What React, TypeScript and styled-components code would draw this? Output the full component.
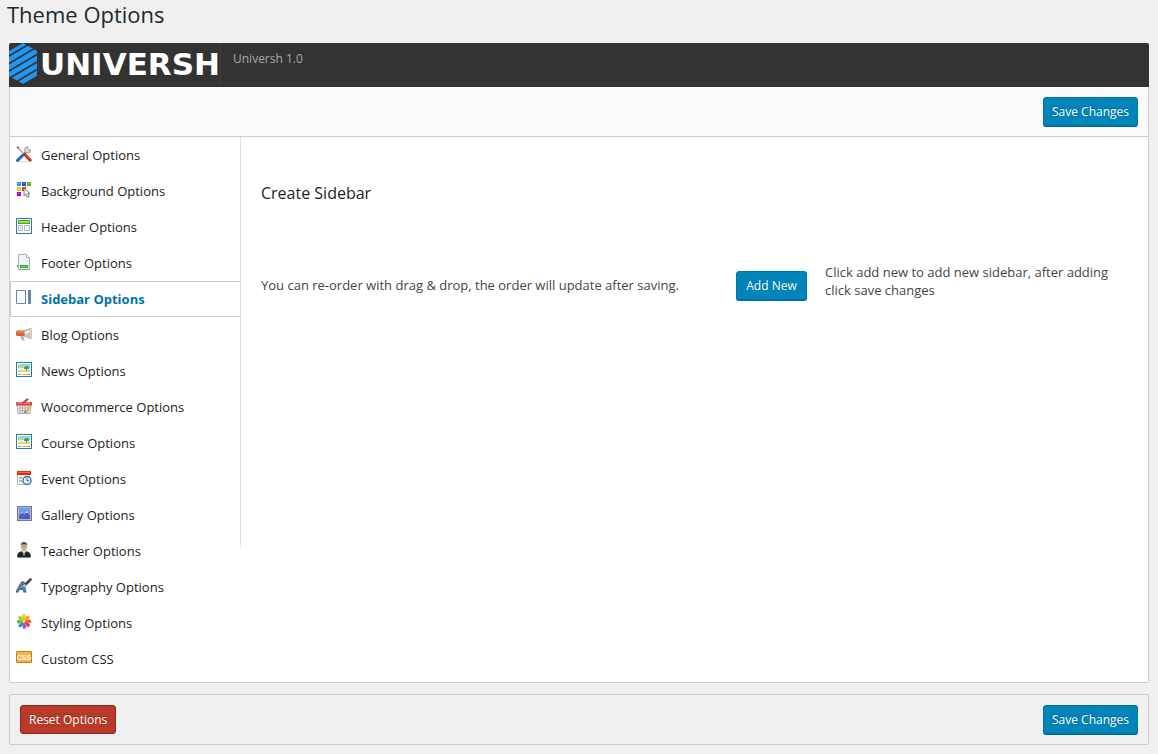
import React, { useState } from "react";
import styled, { createGlobalStyle } from "styled-components";

const GlobalStyle = createGlobalStyle`
  *, *::before, *::after { box-sizing: border-box; }
  body {
    margin: 0;
    background: #f0f0f0;
    color: #444;
    font: 13px/18px "Open Sans", "Noto Sans", sans-serif;
  }
`;

const Page = styled.div`
  padding: 0 9px 9px;
`;

const Title = styled.h1`
  margin: 0 0 15px -2px;
  font-size: 22px;
  font-weight: 400;
  line-height: 28px;
  color: #23282d;
`;

const Panel = styled.form`
  display: block;
`;

const Header = styled.header`
  display: flex;
  height: 44px;
  background: #333;
  border-radius: 2px 2px 0 0;
`;

const Logo = styled.div`
  display: flex;
  align-items: center;
  width: 212px;
  height: 41px;
  border-right: 1px solid #3c3c3c;
  color: #fff;
  font: bold 31px/40px "DejaVu Sans", sans-serif;
`;

const LogoMark = styled.svg`
  flex: none;
  width: 28px;
  height: 41px;
  margin-right: 3px;
`;

const Version = styled.span`
  padding: 7px 12px;
  font-size: 12px;
  color: #aaa;
`;

const Toolbar = styled.div`
  display: flex;
  justify-content: flex-end;
  padding: 10px;
  height: 50px;
  background: #fafafa;
  border: 1px solid #ccc;
  border-top: 0;
`;

const Body = styled.div`
  display: flex;
  align-items: flex-start;
  background: #fff;
  border: 1px solid #ccc;
  border-top: 0;
  border-radius: 0 0 2px 2px;
`;

const Nav = styled.nav`
  flex: none;
  width: 230px;
  padding-bottom: 5px;
`;

const NavLink = styled.a<{ $active: boolean }>`
  display: flex;
  align-items: center;
  gap: 9px;
  height: 36px;
  padding-left: ${(p) => (p.$active ? "5px" : "6px")};
  border: solid #ccc;
  border-width: ${(p) => (p.$active ? "1px 0 1px 1px" : "0")};
  border-radius: 2px 0 0 2px;
  color: ${(p) => (p.$active ? "#0073aa" : "#222")};
  font-weight: ${(p) => (p.$active ? 700 : 400)};
  text-decoration: none;
`;

const Icon = styled.svg`
  flex: none;
  width: 16px;
  height: 16px;
  margin-bottom: 2px;
`;

const Main = styled.main`
  flex: 1;
  min-width: 0;
  min-height: 410px;
  padding: 44px 20px 0;
  border-left: 1px solid #dfdfdf;
`;

const SectionTitle = styled.h2`
  margin: 0 0 58px;
  font-size: 16px;
  font-weight: 400;
  line-height: 24px;
  color: #222;
`;

const SettingRow = styled.div`
  display: grid;
  grid-template-columns: 475px auto minmax(0, 1fr);
  align-items: center;
`;

const Text = styled.p`
  margin: 0;
`;

const Help = styled.p`
  margin: 0 10px 8px 18px;
`;

const Button = styled.button<{ $danger?: boolean }>`
  height: 29px;
  min-width: 71px;
  padding: 0 8px;
  border: 1px solid ${(p) => (p.$danger ? "#8a2b1d" : "#0073aa")};
  border-radius: 3px;
  background: ${(p) => (p.$danger ? "#b93a28" : "#0085ba")};
  box-shadow: 0 1px 0 ${(p) => (p.$danger ? "transparent" : "#006799")};
  color: #fff;
  font: 400 12px/27px "Open Sans", sans-serif;
  text-shadow: 0 -1px 1px ${(p) => (p.$danger ? "#8a2b1d" : "#006799")};
  cursor: pointer;
`;

const Footer = styled.footer`
  display: flex;
  justify-content: space-between;
  margin-top: 11px;
  padding: 10px;
  height: 51px;
  border: 1px solid #ccc;
  border-radius: 2px;
`;

const newsIcon = (
  <>
    <path fill="#1b7fb5" d="M0 0h16v15H0z" />
    <path fill="#fff" d="M1 1h14v13H1z" />
    <path fill="#8dd4f5" d="M2 2h12v8H2z" />
    <path fill="#ddf3fb" d="M2 6h12v2H2z" />
    <path fill="#ffc928" d="M3 3h3v3H3z" />
    <path fill="#e9d877" d="M2 8h5l7 1v1H2z" />
    <path fill="#5c9a3c" d="M8 5h1V4h3v1h1v2h-2v2h-1V7H8z" />
    <path fill="#77b843" d="M2 12h3v1H2z" />
    <path fill="#f4a32f" d="M6 12h3v1H6z" />
    <path fill="#f0713b" d="M10 12h4v1h-4z" />
  </>
);

const items: { label: string; icon: React.ReactNode }[] = [
  {
    label: "General Options",
    icon: (
      <>
        <path d="M1 1l6 6" stroke="#a5a5a5" strokeWidth="1.4" />
        <path d="M1 1l2 1" stroke="#666" strokeWidth="1.4" />
        <path d="M5 11l6-6" stroke="#bbb" strokeWidth="2.4" />
        <path d="M14.5 3.5a3 3 0 1 1-2.5-2.6L11.4 3l1.4 1.3z" fill="#ddd" stroke="#888" strokeWidth=".8" />
        <path d="M1.5 14.5l5-5" stroke="#2563c9" strokeWidth="3" strokeLinecap="round" />
        <path d="M8.5 8l5.7 6.2" stroke="#c92218" strokeWidth="3" strokeLinecap="round" />
        <path d="M9 8l5 5.5" stroke="#f17862" strokeWidth=".7" />
        <path d="M3 15.5h11" stroke="#ccc" strokeWidth=".8" />
      </>
    ),
  },
  {
    label: "Background Options",
    icon: (
      <>
        <path fill="#199fe9" d="M1 0h4v4H1z" />
        <path fill="#3140cc" d="M6 0h4v4H6z" />
        <path fill="#63ae09" d="M11 0h4v4h-4z" />
        <path fill="#f7c600" d="M1 5h4v4H1z" />
        <path fill="#d8322b" d="M6 5h4v4H6z" />
        <path fill="#9b00e8" d="M1 10h4v4H1z" />
        <path fill="#fff" opacity=".35" d="M2 1h2v1H2zM7 1h2v1H7zM12 1h2v1h-2zM2 6h2v1H2zM7 6h2v1H7zM2 11h2v1H2z" />
        <path d="M8 6v8l2-1.7 1.3 3 1.9-.8-1.3-2.8H14z" fill="#eee" stroke="#777" strokeWidth=".9" />
      </>
    ),
  },
  {
    label: "Header Options",
    icon: (
      <>
        <path fill="#1b7eaf" d="M0 0h16v16H0z" />
        <path fill="#fff" d="M1 1h14v14H1z" />
        <path fill="#4f9e17" d="M2 2h12v4H2z" />
        <path fill="#a6dd58" d="M3 3h10v2H3z" />
        <path fill="#bbb" d="M2 7h5v6H2zM8 7h6v6H8z" />
        <path fill="#f4f4f4" d="M3 8h3v4H3zM9 8h4v4H9z" />
        <path fill="#bbb" d="M4 9h1v2H4z" />
      </>
    ),
  },
  {
    label: "Footer Options",
    icon: (
      <>
        <path d="M2.5.5h8l3 3v12h-11z" fill="#edf4f6" stroke="#a5b4b9" />
        <path d="M10.5.5v3h3" fill="#fff" stroke="#a5b4b9" />
        <path fill="#22a82d" d="M1 11h1v2H1zM4 11h8v3H4z" />
        <path fill="#75e36f" d="M5 12h6v1H5z" />
        <path stroke="#888" strokeWidth=".8" d="M3 15.6h11" />
      </>
    ),
  },
  {
    label: "Sidebar Options",
    icon: (
      <>
        <path d="M.5.5h9v13h-9z" fill="#fafcfd" stroke="#6288ad" />
        <path fill="#6288ad" d="M12 0h3v14h-3z" />
      </>
    ),
  },
  {
    label: "Blog Options",
    icon: (
      <>
        <path d="M7 5l7-2.5v10L7 10z" fill="#c6c9cb" stroke="#999" strokeWidth=".6" />
        <path d="M8 6l6-2v3L8 8z" fill="#eee" />
        <path d="M.5 4.500h8v5.500h-8q-1-2.700 0-5.500z" fill="#d7642c" />
        <path d="M1.500 6H8" stroke="#f4a36f" />
        <path d="M4 10h3.500l1.200 4.500H6z" fill="#b6babd" />
        <path d="M15.200 2v11" stroke="#e2a37c" />
      </>
    ),
  },
  { label: "News Options", icon: newsIcon },
  {
    label: "Woocommerce Options",
    icon: (
      <>
        <path d="M1 7h14l-1 8.500H2z" fill="#f2f2f2" stroke="#999" strokeWidth=".8" />
        <path d="M4 7v8M6.5 7v8M9 7v8M11.5 7v8M2 10h12M3 12.6h10" stroke="#999" strokeWidth=".7" />
        <path d="M0 4h16v3.5H0z" fill="#d94848" />
        <path d="M1 5h13" stroke="#f5a09b" />
        <path d="M6.5 5.5L12 .9" stroke="#d33a3a" strokeWidth="2.2" />
        <path d="M14.5 8.500L9 14.5" stroke="#e7b93a" strokeWidth="2" />
        <path d="M9.4 12.8l-1.5 2.8 2.5-1.4z" fill="#555" />
      </>
    ),
  },
  { label: "Course Options", icon: newsIcon },
  {
    label: "Event Options",
    icon: (
      <>
        <path d="M1.5 3.5h12v11h-12z" fill="#f5f5f5" stroke="#bbb" />
        <path fill="#d92b12" d="M1 1h14v4H1z" />
        <path fill="#ff6b45" d="M2 2h12v1H2z" />
        <path d="M3 7h3v2H3zM3 10h3v2H3z" fill="#bbb" />
        <circle cx="11" cy="10.5" r="4" fill="#e9f6fd" stroke="#2875a5" strokeWidth="1.4" />
        <path d="M11 7.8v3h2.2" fill="none" stroke="#345" strokeWidth=".9" />
      </>
    ),
  },
  {
    label: "Gallery Options",
    icon: (
      <>
        <path fill="#77777c" d="M1 0h15v15H1z" />
        <path fill="#b0b7ce" d="M2 1h13v13H2z" />
        <path fill="#6b9cf2" d="M3 2h11v11H3z" />
        <path fill="#5059bf" d="M3 10l3-4 2.5 3L11 5l3 5v3H3z" />
        <path fill="#e6ecff" d="M6 5.5L4.8 7.4l1.3-.3 1 .7zM11 4.5L9.5 7.2l1.5-.5 1.3.5z" />
      </>
    ),
  },
  {
    label: "Teacher Options",
    icon: (
      <>
        <path d="M1.2 15.5c-.3-4 1.5-5.8 4.6-6.3h4.4c3.1.5 4.9 2.3 4.6 6.3z" fill="#1c2227" />
        <path d="M6 9h4l-2 5z" fill="#f3f5f6" />
        <path d="M7.5 10h1l.5 2-1 2-1-2z" fill="#51a5a8" />
        <path d="M5.3 2h5.4v4.5Q10 9.5 8 9.5T5.3 6.5z" fill="#d8a98b" />
        <path d="M4.9 4.5V1.7Q6-.1 8 .1t3.1 1.6v2.8l-.7-2H5.6z" fill="#59463b" />
        <path d="M5 4.8h6" stroke="#849baa" strokeWidth=".8" />
      </>
    ),
  },
  {
    label: "Typography Options",
    icon: (
      <>
        <text
          x="0"
          y="14"
          fontFamily="Liberation Sans, sans-serif"
          fontSize="15"
          fontWeight="700"
          fontStyle="italic"
          fill="#4f8fd0"
          stroke="#3d5a72"
          strokeWidth=".8"
        >
          A
        </text>
        <path d="M9.500 6.500L14.500 1.500" stroke="#444" strokeWidth="2.6" strokeLinecap="round" />
        <path d="M7.500 8.500l2-2" stroke="#bbb" strokeWidth="2.3" />
      </>
    ),
  },
  {
    label: "Styling Options",
    icon: (
      <>
        {["#f3c720", "#f7a334", "#ef5a34", "#df353b", "#b24fc0", "#268fd2", "#63bb35", "#a9cb2a"].map((color, i) => (
          <path
            key={color}
            d="M8 7.500L5.800 3Q5.500.5 8.500 0q2 1.500-.5 7.500z"
            fill={color}
            transform={`rotate(${i * 45} 8 7.5)`}
          />
        ))}
        <circle cx="8" cy="7.5" r="1" fill="#fff4a8" />
      </>
    ),
  },
  {
    label: "Custom CSS",
    icon: (
      <>
        <rect x=".5" y="1.5" width="15" height="11" rx=".5" fill="#f9b33b" stroke="#c87927" />
        <text
          x="8"
          y="10"
          textAnchor="middle"
          fontFamily="Liberation Sans, sans-serif"
          fontSize="7"
          fontWeight="700"
          fill="#fff"
        >
          CSS
        </text>
      </>
    ),
  },
];

export default function App() {
  const [active, setActive] = useState("Sidebar Options");

  return (
    <>
      <GlobalStyle />
      <Page>
        <Title>Theme Options</Title>
        <Panel onSubmit={(e) => e.preventDefault()}>
          <Header>
            <Logo>
              <LogoMark viewBox="0 0 28 41" aria-hidden="true">
                <defs>
                  <clipPath id="hexagon">
                    <path d="M14 0l14 8v25l-14 8L0 33V8z" />
                  </clipPath>
                </defs>
                <g clipPath="url(#hexagon)" stroke="#2196f3" strokeWidth="4.800">
                  <path d="M-2 10.500L30-8.500M-2 18L30-1M-2 25.500L30 6.500M-2 33L30 14M-2 40.500L30 21.500M-2 48L30 29" />
                </g>
              </LogoMark>
              UNIVERSH
            </Logo>
            <Version>Universh 1.0</Version>
          </Header>
          <Toolbar>
            <Button type="submit">Save Changes</Button>
          </Toolbar>
          <Body>
            <Nav>
              {items.map(({ label, icon }) => (
                <NavLink
                  key={label}
                  href="#"
                  $active={label === active}
                  onClick={(e) => {
                    e.preventDefault();
                    setActive(label);
                  }}
                >
                  <Icon viewBox="0 0 16 16" fill="none" aria-hidden="true">
                    {icon}
                  </Icon>
                  {label}
                </NavLink>
              ))}
            </Nav>
            <Main>
              <SectionTitle>Create Sidebar</SectionTitle>
              <SettingRow>
                <Text>You can re-order with drag &amp; drop, the order will update after saving.</Text>
                <Button type="button">Add New</Button>
                <Help>Click add new to add new sidebar, after adding click save changes</Help>
              </SettingRow>
            </Main>
          </Body>
          <Footer>
            <Button type="reset" $danger>
              Reset Options
            </Button>
            <Button type="submit">Save Changes</Button>
          </Footer>
        </Panel>
      </Page>
    </>
  );
}
